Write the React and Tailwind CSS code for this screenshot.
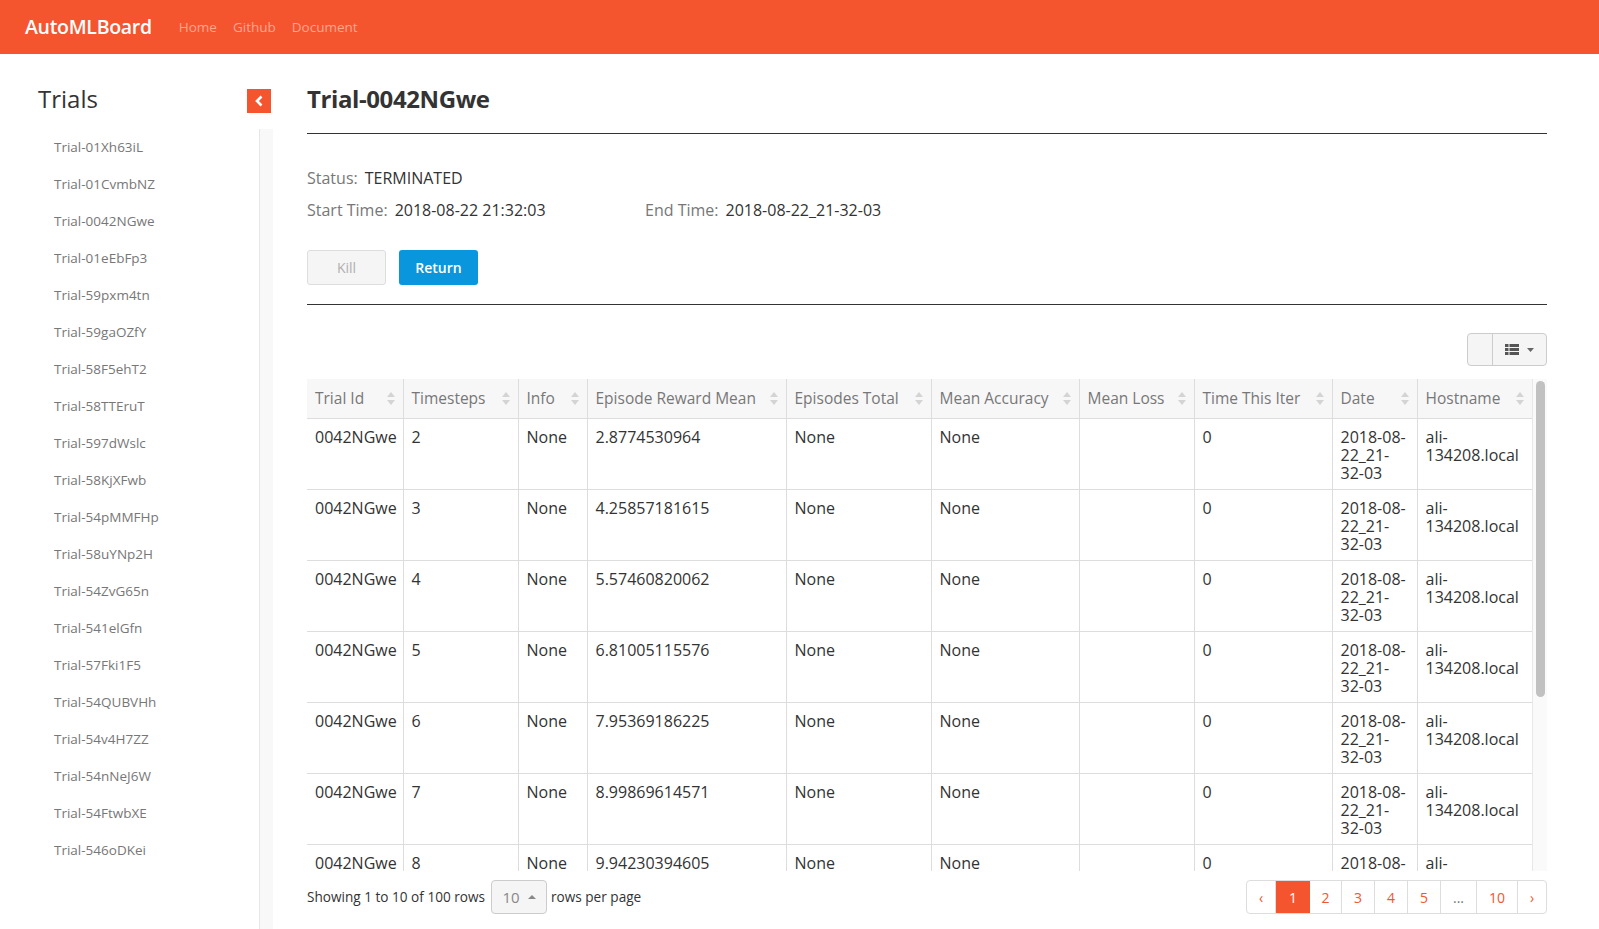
import React from 'react';

const trials = [
  'Trial-01Xh63iL', 'Trial-01CvmbNZ', 'Trial-0042NGwe', 'Trial-01eEbFp3', 'Trial-59pxm4tn',
  'Trial-59gaOZfY', 'Trial-58F5ehT2', 'Trial-58TTEruT', 'Trial-597dWslc', 'Trial-58KjXFwb',
  'Trial-54pMMFHp', 'Trial-58uYNp2H', 'Trial-54ZvG65n', 'Trial-541elGfn', 'Trial-57Fki1F5',
  'Trial-54QUBVHh', 'Trial-54v4H7ZZ', 'Trial-54nNeJ6W', 'Trial-54FtwbXE', 'Trial-546oDKei',
];

const columns = [
  { label: 'Trial Id', w: 96 },
  { label: 'Timesteps', w: 115 },
  { label: 'Info', w: 69 },
  { label: 'Episode Reward Mean', w: 199 },
  { label: 'Episodes Total', w: 145 },
  { label: 'Mean Accuracy', w: 148 },
  { label: 'Mean Loss', w: 115 },
  { label: 'Time This Iter', w: 138 },
  { label: 'Date', w: 85 },
  { label: 'Hostname', w: 115 },
];

const rewards = ['2.8774530964', '4.25857181615', '5.57460820062', '6.81005115576', '7.95369186225', '8.99869614571', '9.94230394605'];

const rows = rewards.map((r, i) => [
  '0042NGwe', String(i + 2), 'None', r, 'None', 'None', '', '0', '2018-08-22_21-32-03', 'ali-134208.local',
]);

function SortIcon() {
  return (
    <svg width="8" height="13" viewBox="0 0 8 13" className="shrink-0">
      <path d="M4 0 L8 5 L0 5 Z" fill="#d4d4d4" />
      <path d="M4 13 L8 8 L0 8 Z" fill="#d4d4d4" />
    </svg>
  );
}

export default function App() {
  return (
    <div className="h-screen overflow-hidden flex flex-col bg-white text-[#333]" style={{ fontFamily: '"Open Sans", sans-serif' }}>
      {/* Top bar */}
      <nav className="h-[54px] shrink-0 bg-[#f4552f] flex items-center pl-[25px]">
        <span className="text-white text-[19.5px] font-semibold tracking-[-0.3px]">AutoMLBoard</span>
        <div className="flex gap-[16px] ml-[27px] text-[13.5px] text-[#fba68f]">
          <a>Home</a>
          <a>Github</a>
          <a>Document</a>
        </div>
      </nav>

      <div className="flex flex-1 min-h-0">
        {/* Sidebar */}
        <aside className="w-[273px] shrink-0 flex flex-col">
          <div className="flex items-start justify-between pl-[38px] pr-[2px] pt-[29px] h-[75px]">
            <span className="text-[24px] leading-[32px] text-[#333]">Trials</span>
            <button className="mt-[6px] w-[24px] h-[24px] bg-[#f4552f] flex items-center justify-center">
              <svg width="10" height="12" viewBox="0 0 10 12">
                <path d="M7.5 1.5 L3 6 L7.5 10.5" stroke="white" strokeWidth="2.6" fill="none" />
              </svg>
            </button>
          </div>
          <div className="flex flex-1 min-h-0">
            <ul className="flex-1 pl-[54px]">
              {trials.map((t) => (
                <li key={t} className="h-[37px] flex items-center text-[13.5px] text-[#777]">{t}</li>
              ))}
            </ul>
            <div className="w-[14px] bg-[#f8f8f8] border-l border-[#e6e6e6]" />
          </div>
        </aside>

        {/* Main */}
        <main className="flex-1 min-w-0 pl-[34px] pr-[52px] pt-[29px]">
          <h1 className="text-[24px] leading-[32px] font-bold text-[#333] tracking-[-0.4px]">Trial-0042NGwe</h1>
          <hr className="mt-[18px] border-0 border-t border-[#333]" />

          <div className="mt-[32px] text-[16px] leading-[24px]">
            <div>
              <span className="text-[#777]">Status:</span>
              <span className="ml-[7px]">TERMINATED</span>
            </div>
            <div className="mt-[8px] flex">
              <div className="w-[338px]">
                <span className="text-[#777]">Start Time:</span>
                <span className="ml-[7px]">2018-08-22 21:32:03</span>
              </div>
              <div>
                <span className="text-[#777]">End Time:</span>
                <span className="ml-[7px]">2018-08-22_21-32-03</span>
              </div>
            </div>
          </div>

          <div className="mt-[28px] flex gap-[13px]">
            <button className="w-[79px] h-[35px] rounded-[3px] border border-[#ddd] bg-[#f5f5f5] text-[#b0b0b0] text-[14px]">Kill</button>
            <button className="w-[79px] h-[35px] rounded-[3px] bg-[#0996dd] text-white text-[14px] font-semibold">Return</button>
          </div>
          <hr className="mt-[19px] border-0 border-t border-[#333]" />

          {/* Toolbar */}
          <div className="mt-[28px] flex justify-end">
            <div className="flex h-[33px] rounded-[4px] border border-[#ccc] bg-[#f5f5f5]">
              <div className="w-[25px] border-r border-[#ccc]" />
              <div className="w-[53px] flex items-center justify-center gap-[8px]">
                <svg width="14" height="11" viewBox="0 0 14 11">
                  <rect x="0" y="0" width="3.5" height="3" fill="#555" />
                  <rect x="4.5" y="0" width="9.5" height="3" fill="#555" />
                  <rect x="0" y="4" width="3.5" height="3" fill="#555" />
                  <rect x="4.5" y="4" width="9.5" height="3" fill="#555" />
                  <rect x="0" y="8" width="3.5" height="3" fill="#555" />
                  <rect x="4.5" y="8" width="9.5" height="3" fill="#555" />
                </svg>
                <svg width="7" height="4" viewBox="0 0 7 4">
                  <path d="M0 0 L7 0 L3.5 4 Z" fill="#666" />
                </svg>
              </div>
            </div>
          </div>

          {/* Table */}
          <div className="mt-[13px] flex h-[492px]">
            <div className="flex-1 min-w-0 overflow-hidden">
              <table className="table-fixed border-collapse w-[1225px] text-[16px] leading-[18px]">
                <colgroup>
                  {columns.map((c) => (
                    <col key={c.label} style={{ width: c.w }} />
                  ))}
                </colgroup>
                <thead>
                  <tr className="h-[39px] bg-[#f7f7f7]">
                    {columns.map((c, i) => (
                      <th
                        key={c.label}
                        className={`px-[8px] text-left font-normal text-[15.5px] text-[#777] border-b border-[#ddd] ${i < columns.length - 1 ? 'border-r' : ''}`}
                      >
                        <div className="flex items-center justify-between">
                          <span className="whitespace-nowrap">{c.label}</span>
                          <SortIcon />
                        </div>
                      </th>
                    ))}
                  </tr>
                </thead>
                <tbody>
                  {rows.map((r, ri) => (
                    <tr key={ri} className="h-[71px]">
                      {r.map((v, ci) => (
                        <td
                          key={ci}
                          className={`align-top pt-[9px] px-[8px] border-b border-[#ddd] ${ci < r.length - 1 ? 'border-r' : ''}`}
                        >
                          {v}
                        </td>
                      ))}
                    </tr>
                  ))}
                </tbody>
              </table>
            </div>
            <div className="w-[15px] shrink-0 bg-[#fafafa] border-l border-[#e8e8e8] pt-[2px] flex justify-center">
              <div className="w-[9px] h-[316px] rounded-full bg-[#c1c1c1]" />
            </div>
          </div>

          {/* Footer */}
          <div className="mt-[9px] flex items-center justify-between">
            <div className="flex items-center text-[13.6px]">
              <span>Showing 1 to 10 of 100 rows</span>
              <div className="ml-[6px] w-[56px] h-[34px] rounded-[4px] border border-[#ccc] bg-[#f5f5f5] flex items-center justify-center gap-[8px] text-[#888] text-[15px]">
                <span>10</span>
                <svg width="8" height="4" viewBox="0 0 8 4">
                  <path d="M0 4 L8 4 L4 0 Z" fill="#888" />
                </svg>
              </div>
              <span className="ml-[4px]">rows per page</span>
            </div>
            <ul className="flex h-[34px] border border-[#ddd] rounded-[4px] overflow-hidden text-[14px] text-[#f4552f]">
              <li className="w-[29px] flex items-center justify-center border-r border-[#ddd]">‹</li>
              <li className="w-[34px] flex items-center justify-center bg-[#f4552f] text-white">1</li>
              <li className="w-[32px] flex items-center justify-center border-r border-[#ddd]">2</li>
              <li className="w-[33px] flex items-center justify-center border-r border-[#ddd]">3</li>
              <li className="w-[33px] flex items-center justify-center border-r border-[#ddd]">4</li>
              <li className="w-[33px] flex items-center justify-center border-r border-[#ddd]">5</li>
              <li className="w-[36px] flex items-center justify-center border-r border-[#ddd] text-[#777]">...</li>
              <li className="w-[41px] flex items-center justify-center border-r border-[#ddd]">10</li>
              <li className="w-[28px] flex items-center justify-center">›</li>
            </ul>
          </div>
        </main>
      </div>
    </div>
  );
}
